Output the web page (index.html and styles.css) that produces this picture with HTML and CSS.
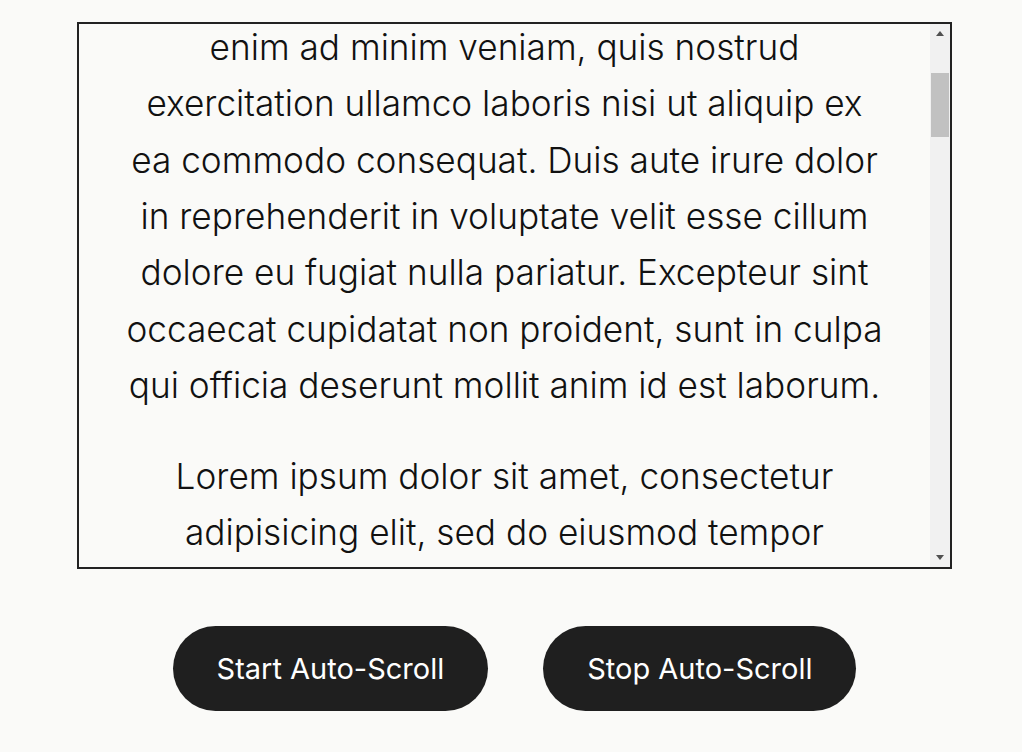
FILE: index.html
```html
<!DOCTYPE html>
<html lang="en">
  <head>
    <meta charset="UTF-8" />
    <meta name="viewport" content="width=device-width, initial-scale=1.0" />
    <title>Auto-Scroll</title>
    <link rel="stylesheet" href="styles.css">
  </head>
  <body>
    <div class="container">
      <!-- Scrolling text box with its own scrollbar -->
      <div class="scroll-frame">
        <div class="scroll-box" id="scroll-box">
          <p>Lorem ipsum dolor sit amet, consectetur adipisicing elit, sed do eiusmod tempor incididunt ut labore et dolore magna aliqua. Ut enim ad minim veniam, quis nostrud exercitation ullamco laboris nisi ut aliquip ex ea commodo consequat. Duis aute irure dolor in reprehenderit in voluptate velit esse cillum dolore eu fugiat nulla pariatur. Excepteur sint occaecat cupidatat non proident, sunt in culpa qui officia deserunt mollit anim id est laborum.</p>
          <p>Lorem ipsum dolor sit amet, consectetur adipisicing elit, sed do eiusmod tempor incididunt ut labore et dolore magna aliqua. Ut enim ad minim veniam, quis nostrud exercitation ullamco laboris nisi ut aliquip ex ea commodo consequat. Duis aute irure dolor in reprehenderit in voluptate velit esse cillum dolore eu fugiat nulla pariatur. Excepteur sint occaecat cupidatat non proident, sunt in culpa qui officia deserunt mollit anim id est laborum.</p>
          <p>Lorem ipsum dolor sit amet, consectetur adipisicing elit, sed do eiusmod tempor incididunt ut labore et dolore magna aliqua. Ut enim ad minim veniam, quis nostrud exercitation ullamco laboris nisi ut aliquip ex ea commodo consequat. Duis aute irure dolor in reprehenderit in voluptate velit esse cillum dolore eu fugiat nulla pariatur. Excepteur sint occaecat cupidatat non proident, sunt in culpa qui officia deserunt mollit anim id est laborum.</p>
          <p>Lorem ipsum dolor sit amet, consectetur adipisicing elit, sed do eiusmod tempor incididunt ut labore et dolore magna aliqua. Ut enim ad minim veniam, quis nostrud exercitation ullamco laboris nisi ut aliquip ex ea commodo consequat. Duis aute irure dolor in reprehenderit in voluptate velit esse cillum dolore eu fugiat nulla pariatur. Excepteur sint occaecat cupidatat non proident, sunt in culpa qui officia deserunt mollit anim id est laborum.</p>
          <p>Lorem ipsum dolor sit amet, consectetur adipisicing elit, sed do eiusmod tempor incididunt ut labore et dolore magna aliqua. Ut enim ad minim veniam, quis nostrud exercitation ullamco laboris nisi ut aliquip ex ea commodo consequat. Duis aute irure dolor in reprehenderit in voluptate velit esse cillum dolore eu fugiat nulla pariatur. Excepteur sint occaecat cupidatat non proident, sunt in culpa qui officia deserunt mollit anim id est laborum.</p>
          <p>Lorem ipsum dolor sit amet, consectetur adipisicing elit, sed do eiusmod tempor incididunt ut labore et dolore magna aliqua. Ut enim ad minim veniam, quis nostrud exercitation ullamco laboris nisi ut aliquip ex ea commodo consequat. Duis aute irure dolor in reprehenderit in voluptate velit esse cillum dolore eu fugiat nulla pariatur. Excepteur sint occaecat cupidatat non proident, sunt in culpa qui officia deserunt mollit anim id est laborum.</p>
          <p>Lorem ipsum dolor sit amet, consectetur adipisicing elit, sed do eiusmod tempor incididunt ut labore et dolore magna aliqua. Ut enim ad minim veniam, quis nostrud exercitation ullamco laboris nisi ut aliquip ex ea commodo consequat. Duis aute irure dolor in reprehenderit in voluptate velit esse cillum dolore eu fugiat nulla pariatur. Excepteur sint occaecat cupidatat non proident, sunt in culpa qui officia deserunt mollit anim id est laborum.</p>
          <p>Lorem ipsum dolor sit amet, consectetur adipisicing elit, sed do eiusmod tempor incididunt ut labore et dolore magna aliqua. Ut enim ad minim veniam, quis nostrud exercitation ullamco laboris nisi ut aliquip ex ea commodo consequat. Duis aute irure dolor in reprehenderit in voluptate velit esse cillum dolore eu fugiat nulla pariatur. Excepteur sint occaecat cupidatat non proident, sunt in culpa qui officia deserunt mollit anim id est laborum.</p>
          <p>Lorem ipsum dolor sit amet, consectetur adipisicing elit, sed do eiusmod tempor incididunt ut labore et dolore magna aliqua. Ut enim ad minim veniam, quis nostrud exercitation ullamco laboris nisi ut aliquip ex ea commodo consequat. Duis aute irure dolor in reprehenderit in voluptate velit esse cillum dolore eu fugiat nulla pariatur. Excepteur sint occaecat cupidatat non proident, sunt in culpa qui officia deserunt mollit anim id est laborum.</p>
          <p>Lorem ipsum dolor sit amet, consectetur adipisicing elit, sed do eiusmod tempor incididunt ut labore et dolore magna aliqua. Ut enim ad minim veniam, quis nostrud exercitation ullamco laboris nisi ut aliquip ex ea commodo consequat. Duis aute irure dolor in reprehenderit in voluptate velit esse cillum dolore eu fugiat nulla pariatur. Excepteur sint occaecat cupidatat non proident, sunt in culpa qui officia deserunt mollit anim id est laborum.</p>
        </div>
        <div class="scrollbar">
          <div class="arrow up" onclick="nudge(-40)"></div>
          <div class="track" id="track">
            <div class="thumb" id="thumb"></div>
          </div>
          <div class="arrow down" onclick="nudge(40)"></div>
        </div>
      </div>

      <!-- Controls -->
      <div class="controls">
        <button id="start-button" onclick="startScroll()">Start Auto-Scroll</button>
        <button id="stop-button" onclick="stopScroll()">Stop Auto-Scroll</button>
      </div>
    </div>

    <script>
      const box = document.getElementById("scroll-box");
      const track = document.getElementById("track");
      const thumb = document.getElementById("thumb");
      let timer = null;

      function updateThumb() {
        const trackHeight = track.clientHeight;
        const size = trackHeight * box.clientHeight / box.scrollHeight;
        const room = trackHeight - size;
        const max = box.scrollHeight - box.clientHeight;
        thumb.style.height = size + "px";
        thumb.style.marginTop = (room * box.scrollTop / max) + "px";
      }

      function nudge(amount) {
        box.scrollTop += amount;
        updateThumb();
      }

      function startScroll() {
        if (timer) return;
        timer = setInterval(() => nudge(1), 20);
      }

      function stopScroll() {
        clearInterval(timer);
        timer = null;
      }

      box.addEventListener("wheel", (e) => nudge(e.deltaY));

      // where the page was left when the picture was taken
      box.scrollTop = 254;
    </script>
  </body>
</html>
```

FILE: styles.css
```css
body {
  margin: 0;
  padding: 22px 0 0 7px;
  background-color: #fafaf8;
  font-family: Inter, "Noto Sans", sans-serif;
  color: #111;
}
.container {
  width: 875px;
  margin: auto;
}
.scroll-frame {
  display: flex;
  height: 547px;
  box-sizing: border-box;
  border: 2px solid #222;
}
.scroll-box {
  flex: 1;
  overflow: hidden;
  padding: 45px 47px 0;
  text-align: center;
  font-weight: 300;
  font-size: 35.2px;
  line-height: 1.6;
}
.scroll-box p {
  margin: 35px 0;
}
.scrollbar {
  width: 20px;
  display: flex;
  flex-direction: column;
  background: #f1f1f1;
}
.arrow {
  height: 19px;
  display: flex;
  align-items: center;
  justify-content: center;
}
.arrow::after {
  content: "";
  border-left: 4.5px solid transparent;
  border-right: 4.5px solid transparent;
}
.arrow.up::after {
  border-bottom: 5px solid #505050;
}
.arrow.down::after {
  border-top: 5px solid #505050;
}
.track {
  flex: 1;
  padding: 0 1px;
}
.thumb {
  height: 64px;
  margin-top: 30px;
  background: #c1c1c1;
}
.controls {
  display: flex;
  justify-content: center;
  gap: 55px;
  margin-top: 57px;
}
.controls button {
  padding: 25px 44px;
  border: none;
  border-radius: 50px;
  background-color: #1f1f1f;
  color: #fff;
  font-family: Inter, "Noto Sans", sans-serif;
  font-size: 29px;
  cursor: pointer;
}
```
